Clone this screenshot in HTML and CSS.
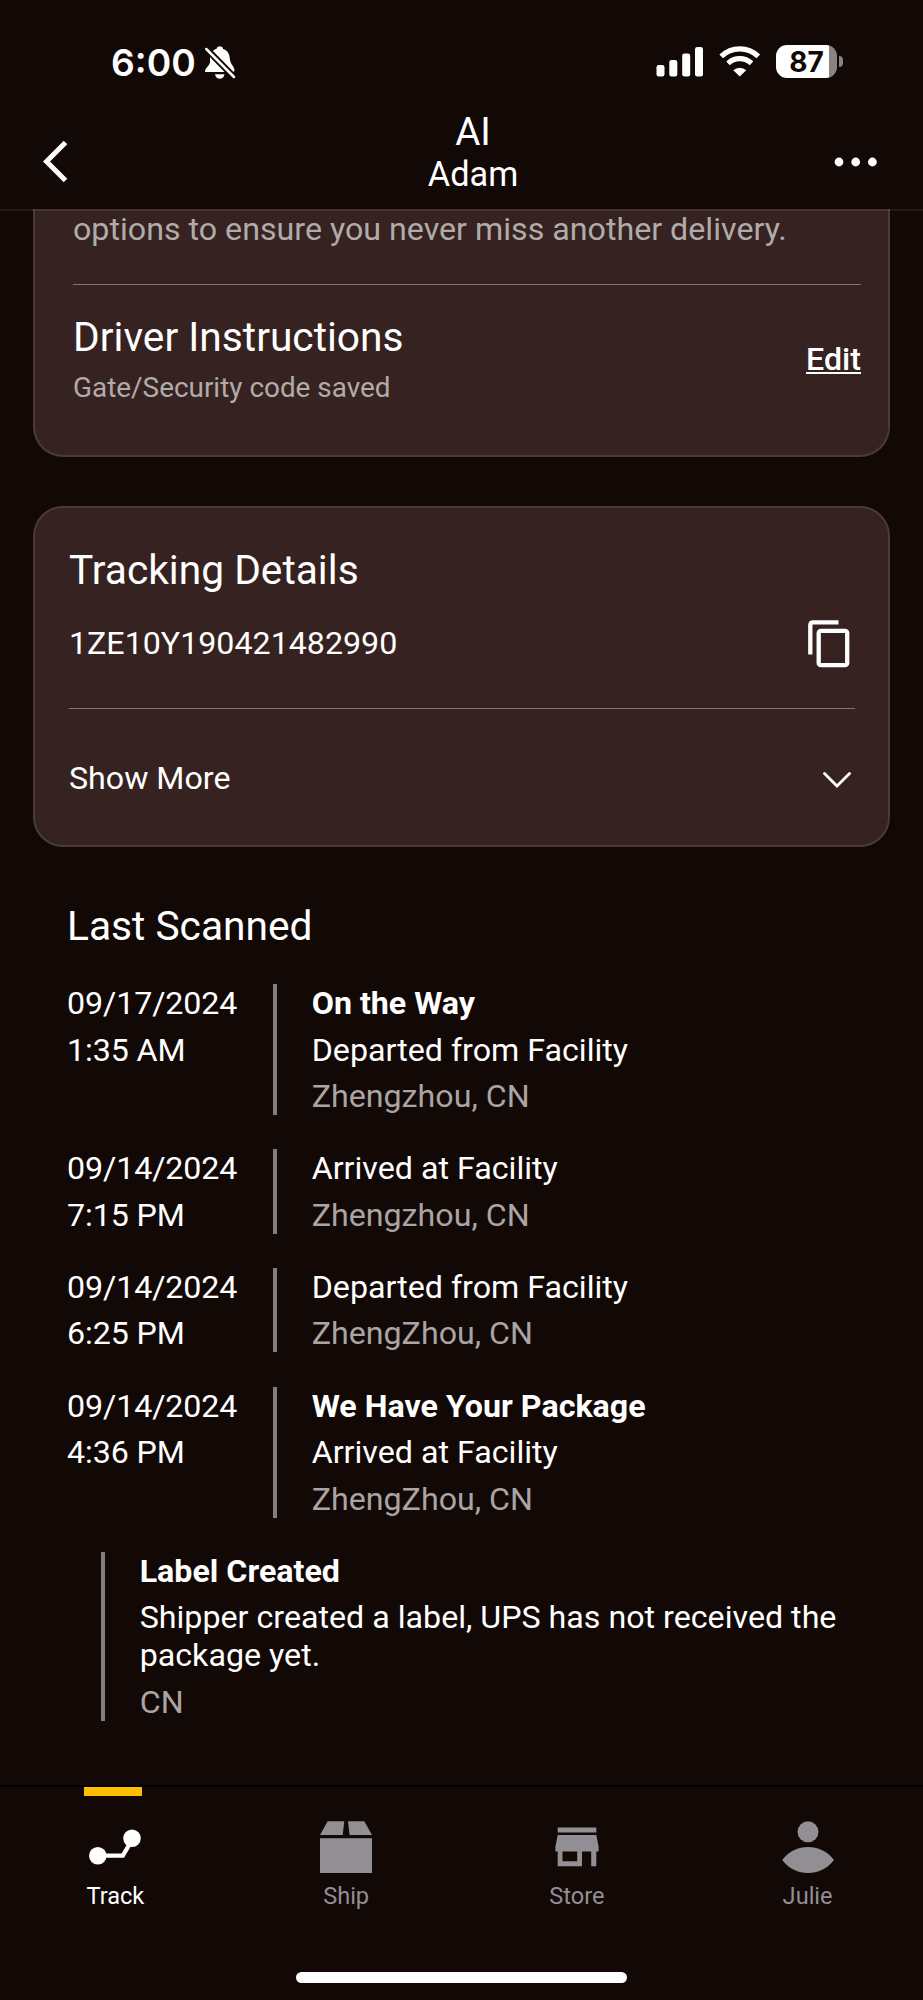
FILE: index.html
```html
<!DOCTYPE html>
<html lang="en">
<head>
<meta charset="utf-8">
<title>Tracking Details</title>
<link rel="stylesheet" href="styles.css">
</head>
<body>
<div class="screen">
  <header class="header">
    <div class="status">
      <div class="status-left">
        <span class="time">6:00</span>
        <svg class="bell" width="32" height="34" viewBox="0 0 32 34">
          <path d="M1 25.500C1 22 5.500 20 6 16V12C6 7 9 3.500 12.500 3C12.800 1 14 .5 15.800 .5S18.800 1 19.100 3C23 4 25.500 7.500 25.700 12C26 18 30 20 30.500 24Q30.500 26 29 26H2Q1 26 1 25.500Z" fill="#fff"/>
          <path d="M11 28.300H20.500C20 31.500 18 32.800 15.800 32.800S11.500 31.500 11 28.300Z" fill="#fff"/>
          <path d="M2.500 3L30 31" stroke="#120806" stroke-width="6.500"/>
          <path d="M2.300 3L30 31" stroke="#fff" stroke-width="2.500" stroke-linecap="round"/>
        </svg>
      </div>
      <div class="status-right">
        <svg class="signal" width="48" height="32" viewBox="0 0 48 32" fill="#fff">
          <rect x="0.500" y="19" width="8" height="11.500" rx="2.300"/><rect x="13.300" y="14" width="8" height="16.500" rx="2.300"/><rect x="26.200" y="7.500" width="8" height="23" rx="2.300"/><rect x="39" y="1" width="8" height="29.500" rx="2.300"/>
        </svg>
        <svg class="wifi" width="42" height="32" viewBox="0 0 42 32" fill="none" stroke="#fff">
          <path d="M2.200 10.400A26.500 26.500 0 0 1 39.300 10.400" stroke-width="5.200"/>
          <path d="M9 17.300A17.200 17.200 0 0 1 32.500 17.300" stroke-width="5.200"/>
          <path d="M14.300 24.200A9.500 9.500 0 0 1 27.200 24.200L20.750 30.600Z" fill="#fff" stroke="none"/>
        </svg>
        <div class="battery"><span class="battery-body">87</span><span class="battery-cap"></span></div>
      </div>
    </div>
    <nav class="nav">
      <svg class="back" width="26" height="43" viewBox="0 0 26 43"><path d="M22.500 2.500L3.500 21.500L22.500 40.500" fill="none" stroke="#fff" stroke-width="5"/></svg>
      <div class="heading"><div class="heading-top">AI</div><div class="heading-name">Adam</div></div>
      <svg class="more" width="44" height="10" viewBox="0 0 44 10" fill="#fff"><circle cx="5" cy="5" r="4.400"/><circle cx="21.700" cy="5" r="4.400"/><circle cx="38.400" cy="5" r="4.400"/></svg>
    </nav>
  </header>

  <main class="content">
    <section class="card card-driver">
      <p class="options">options to ensure you never miss another delivery.</p>
      <div class="driver">
        <div>
          <h2 class="title">Driver Instructions</h2>
          <p class="note">Gate/Security code saved</p>
        </div>
        <a class="edit">Edit</a>
      </div>
    </section>

    <section class="card card-tracking">
      <h2 class="title">Tracking Details</h2>
      <div class="number">
        <span>1ZE10Y190421482990</span>
        <svg class="copy" width="42" height="48" viewBox="0 0 42 48" fill="none" stroke="#fff" stroke-width="4.300">
          <path d="M2.300 34.500V5Q2.300 2.300 5 2.300H30.500"/><rect x="10.700" y="10.900" width="28.500" height="34.300" rx="2.200"/>
        </svg>
      </div>
      <div class="show-more">
        <span>Show More</span>
        <svg class="chevron" width="28" height="17" viewBox="0 0 28 17"><path d="M1.500 1.500L14 14L26.500 1.500" fill="none" stroke="#fff" stroke-width="2.800" stroke-linecap="round"/></svg>
      </div>
    </section>

    <section class="scans">
      <h2 class="title">Last Scanned</h2>
      <div class="scan-list">
        <div class="scan"><div class="when"><span>09/17/2024</span><span>1:35 AM</span></div><div class="what"><b>On the Way</b><span>Departed from Facility</span><span class="place">Zhengzhou, CN</span></div></div>
        <div class="scan"><div class="when"><span>09/14/2024</span><span>7:15 PM</span></div><div class="what"><span>Arrived at Facility</span><span class="place">Zhengzhou, CN</span></div></div>
        <div class="scan"><div class="when"><span>09/14/2024</span><span>6:25 PM</span></div><div class="what"><span>Departed from Facility</span><span class="place">ZhengZhou, CN</span></div></div>
        <div class="scan"><div class="when"><span>09/14/2024</span><span>4:36 PM</span></div><div class="what"><b>We Have Your Package</b><span>Arrived at Facility</span><span class="place">ZhengZhou, CN</span></div></div>
        <div class="scan undated"><div class="what"><b>Label Created</b><span>Shipper created a label, UPS has not received the package yet.</span><span class="place">CN</span></div></div>
      </div>
    </section>
  </main>

  <footer class="footer">
    <div class="tabs">
      <div class="tab active">
        <svg width="54" height="54" viewBox="0 0 54 54"><path d="M10 35.700H34.800L45 18.500" fill="none" stroke="currentColor" stroke-width="4.300"/><circle cx="9.800" cy="35.700" r="8.800" fill="currentColor"/><circle cx="44" cy="18.300" r="8.800" fill="currentColor"/></svg>
        <span>Track</span>
      </div>
      <div class="tab">
        <svg width="54" height="54" viewBox="0 0 54 54" fill="currentColor"><path d="M8.700 1.300H25.300L23.700 15H1ZM29 1.300H45.300L53 15H30.600ZM1 18.300H53V53H1Z"/></svg>
        <span>Ship</span>
      </div>
      <div class="tab">
        <svg width="54" height="54" viewBox="0 0 54 54" fill="currentColor"><path d="M7.700 7.600H46.300V12.500H7.700ZM7.700 14.900H46.300L48.600 26.500V31.600H46.300V46.300H41.200V31.600H32V46.300H7.700V31.600H5.400V26.500ZM12.500 31.600V41.200H27.200V31.600Z" fill-rule="evenodd"/></svg>
        <span>Store</span>
      </div>
      <div class="tab">
        <svg width="54" height="54" viewBox="0 0 54 54" fill="currentColor"><circle cx="27" cy="11.800" r="10.500"/><path d="M1.200 40C14 22.700 40 22.700 53 40C40 57.300 14 57.300 1.200 40Z"/></svg>
        <span>Julie</span>
      </div>
    </div>
    <div class="home"></div>
  </footer>
</div>
</body>
</html>
```

FILE: styles.css
```css
* { box-sizing: border-box; }
body { margin: 0; background: #120806; color: #fff; font: 32.2px/38px Roboto, sans-serif; }
h2, p { margin: 0; font-weight: 400; }
svg { display: block; flex: none; }
.screen { width: 923px; height: 2000px; display: flex; flex-direction: column; overflow: hidden; }

.header { position: relative; height: 209px; flex: none; }
.header::after { content: ""; position: absolute; left: 0; right: 0; top: 209px; height: 2px; background: rgba(255, 255, 255, .08); }
.status { height: 108px; padding: 44px 80px 0 111px; display: flex; justify-content: space-between; align-items: flex-start; }
.status-left { display: flex; }
.time { width: 93px; font: 600 37.200px/38px Inter, sans-serif; }
.bell { margin-top: 2px; }
.status-right { display: flex; }
.signal { margin-top: 2px; }
.wifi { margin: 2px 0 0 15px; }
.battery { display: flex; align-items: center; gap: 2px; margin: 1px 0 0 15px; }
.battery-body { width: 61px; height: 33px; border-radius: 11px; background: linear-gradient(90deg, #fff 53px, #8b8382 53px); color: #120806; font: 700 28px/34px Inter, sans-serif; text-align: center; }
.battery-cap { width: 4px; height: 11px; border-radius: 0 5px 5px 0; background: #8b8382; }
.nav { height: 101px; padding: 0 45px 0 43px; display: flex; justify-content: space-between; align-items: flex-start; }
.back { margin-top: 32px; }
.heading { text-align: center; padding-left: 43px; }
.heading-top { font-size: 38.600px; line-height: 47px; }
.heading-name { font-size: 34.300px; line-height: 39px; }
.more { margin-top: 49px; }

.content { flex: 1; padding: 0 33px; }
.card { background: #362321; border: 2px solid #483b3a; }
.title { font-size: 40.700px; line-height: 48px; }
.card-driver { height: 248px; padding: 1px 27px 0 38px; border-top: 0; border-radius: 0 0 30px 30px; }
.options { height: 75px; color: #b1abaa; border-bottom: 1px solid #7f7872; }
.driver { display: flex; justify-content: space-between; padding-top: 28px; }
.note { margin-top: 10px; font-size: 27.900px; line-height: 34px; color: #b1abaa; }
.edit { font-weight: 500; text-decoration: underline; text-decoration-thickness: 2px; text-underline-offset: 2px; margin-top: 27px; }
.card-tracking { height: 341px; margin-top: 49px; padding: 38px 33px 0 34px; border-radius: 30px; }
.number { display: flex; justify-content: space-between; height: 115px; padding: 30px 5px 0 0; border-bottom: 1px solid #7f7872; }
.copy { margin-top: -4px; }
.show-more { display: flex; justify-content: space-between; padding: 50px 4px 0 0; }
.chevron { margin-top: 13px; }

.scans { padding: 55px 34px 0; }
.scan-list { display: flex; flex-direction: column; gap: 34.200px; margin-top: 34px; }
.scan { display: flex; }
.when, .what { display: flex; flex-direction: column; gap: 8.500px; }
.when { width: 206px; letter-spacing: -.1px; }
.what { flex: 1; border-left: 4px solid #857d7b; padding-left: 34.700px; }
.undated { padding-left: 34px; }
.place { color: #aaa4a2; }
b { font-weight: 700; }

.footer { height: 215px; border-top: 2px solid #000; }
.tabs { display: grid; grid-template-columns: repeat(4, 1fr); height: 185px; }
.tab { display: flex; flex-direction: column; align-items: center; padding-top: 33px; position: relative; color: #918f94; font-size: 23.600px; line-height: 28px; }
.tab span { margin-top: 8px; }
.active { color: #fff; }
.active::before { content: ""; position: absolute; top: 0; left: 83.500px; width: 58px; height: 9px; background: #ffbe00; }
.home { width: 331px; height: 11px; margin: 0 auto; border-radius: 6px; background: #fff; }
```
